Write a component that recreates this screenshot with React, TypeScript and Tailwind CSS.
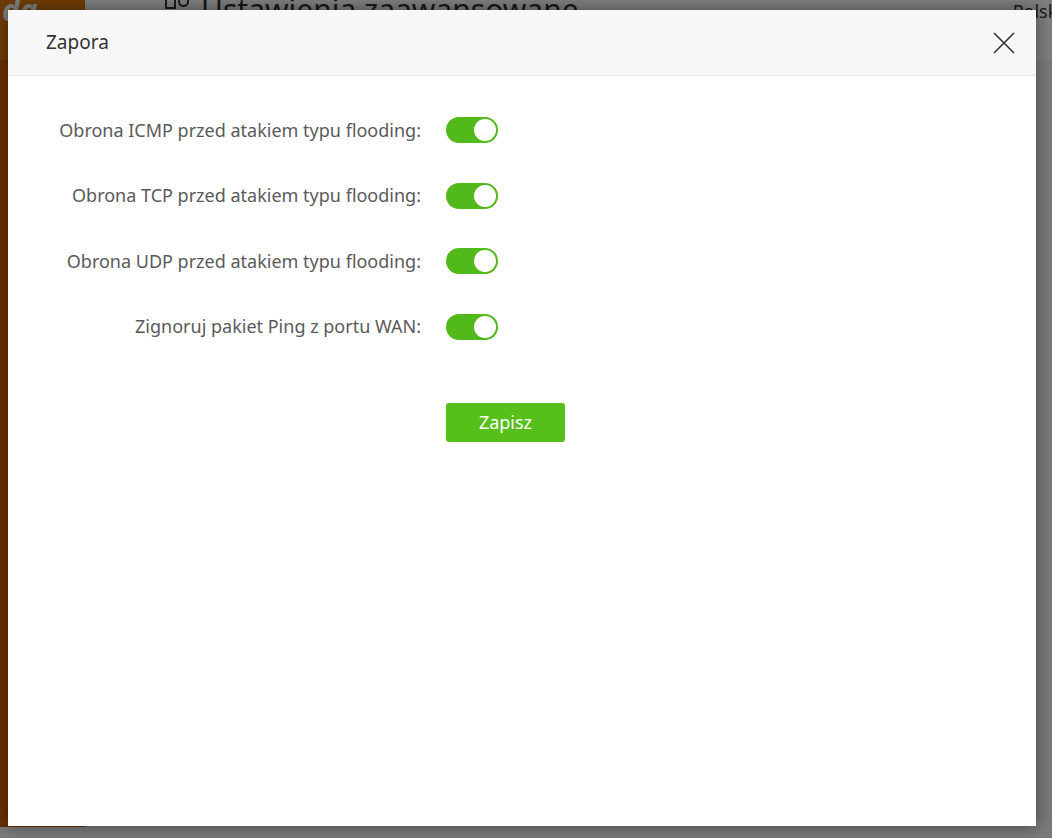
import React from "react";

const rows = [
  "Obrona ICMP przed atakiem typu flooding:",
  "Obrona TCP przed atakiem typu flooding:",
  "Obrona UDP przed atakiem typu flooding:",
  "Zignoruj pakiet Ping z portu WAN:",
];

function Toggle() {
  return (
    <div className="relative w-[52px] h-[26px] rounded-full bg-[#52b91a]">
      <div className="absolute right-[2px] top-[2px] w-[22px] h-[22px] rounded-full bg-white" />
    </div>
  );
}

export default function App() {
  return (
    <div
      className="relative w-[1052px] h-[838px] overflow-hidden bg-[#f4f4f4]"
      style={{ fontFamily: '"Noto Sans", "Open Sans", sans-serif' }}
    >
      {/* background page */}
      <div className="flex h-[827px]">
        <div className="w-[85px] h-full bg-[#d66200] flex flex-col">
          <div className="h-[60px] bg-[#e07a08] text-white text-[30px] font-bold italic pl-[2px] leading-[20px]">da</div>
        </div>
        <div className="flex-1 flex flex-col">
          <div className="h-[60px] bg-white flex items-start justify-between pl-[80px]">
            <div className="flex items-start gap-[12px] -mt-[9px]">
              <div className="flex items-start gap-[2px] mt-[5px]">
                <div className="w-[11px] h-[13px] border-[2px] border-[#333]" />
                <div className="w-[11px] h-[11px] rounded-full border-[2px] border-[#333]" />
              </div>
              <span className="text-[30px] text-[#333] leading-[38px]">Ustawienia zaawansowane</span>
            </div>
            <span className="text-[18px] text-[#333] leading-[22px] -mr-[10px]">Polski</span>
          </div>
        </div>
      </div>

      {/* overlay */}
      <div className="absolute inset-0 bg-black/50" />

      {/* modal */}
      <div className="absolute left-[8px] top-[10px] w-[1028px] h-[816px] bg-white flex flex-col shadow-[0_0_16px_rgba(0,0,0,0.45)]">
        <div className="h-[66px] bg-[#f7f7f7] border-b border-[#e6e6e6] flex items-center justify-between pl-[38px] pr-[20px]">
          <span className="text-[19px] text-[#333]">Zapora</span>
          <svg width="24" height="24" viewBox="0 0 24 24">
            <path d="M2 2 L22 22 M22 2 L2 22" stroke="#333" strokeWidth="1.6" fill="none" />
          </svg>
        </div>
        <div className="flex flex-col pt-[41px]">
          <div className="flex flex-col gap-[39.5px]">
            {rows.map((r) => (
              <div key={r} className="flex items-center h-[26px]">
                <div className="w-[413px] text-right text-[18px] text-[#5a5a5a]">{r}</div>
                <div className="ml-[25px]">
                  <Toggle />
                </div>
              </div>
            ))}
          </div>
          <div className="ml-[438px] mt-[63px]">
            <button className="w-[119px] h-[39px] rounded-[3px] bg-[#56bf1a] text-white text-[18px]">
              Zapisz
            </button>
          </div>
        </div>
      </div>
    </div>
  );
}
